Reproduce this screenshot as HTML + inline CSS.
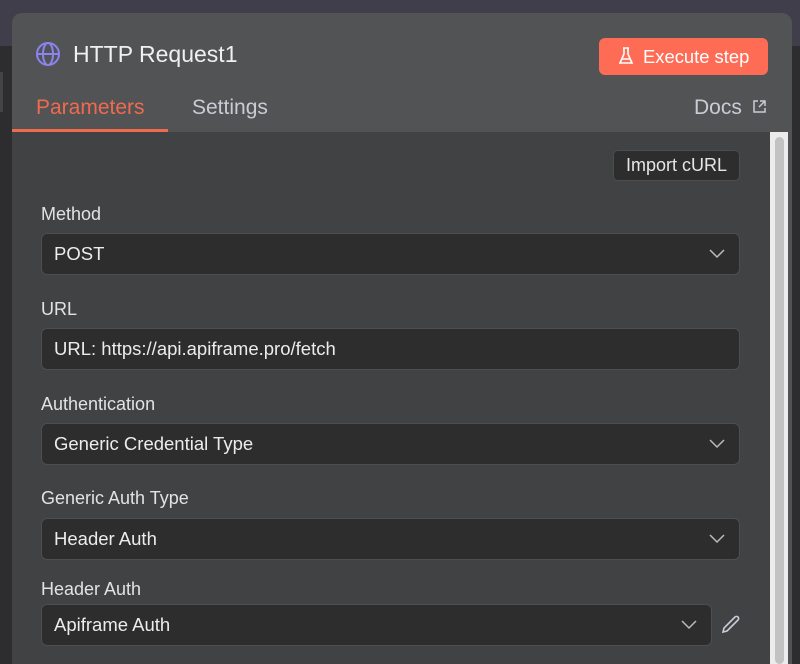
<!DOCTYPE html>
<html><head><style>
*{margin:0;padding:0;box-sizing:border-box}
html,body{width:800px;height:664px;overflow:hidden}
body{background:#2d2d2f;font-family:"Liberation Sans",sans-serif;position:relative}
.top{position:absolute;left:0;top:0;width:800px;height:46px;background:#403e4b}
.leftstrip{position:absolute;left:0;top:72px;width:3px;height:40px;background:#444}
.panel{position:absolute;left:12px;top:13px;width:780px;height:651px;background:#525354;border-radius:10px 10px 0 0;overflow:hidden}
.body{position:absolute;left:0;top:119px;width:758px;height:532px;background:#414243}
.track{position:absolute;left:758px;top:119px;width:18px;height:532px;background:#ececec}
.thumb{position:absolute;left:763px;top:124px;width:9px;height:527px;background:#c2c2c2;border-radius:5px}
.title{position:absolute;left:73px;top:41px;font-size:23px;color:#f0f0f0;line-height:26px}
.exec{position:absolute;left:599px;top:38px;width:169px;height:37px;background:#fe6c55;border-radius:6px;color:#fff;font-size:18.4px;line-height:37px;padding-left:44px}
.tab{position:absolute;top:96px;font-size:21px;line-height:24px}
.uline{position:absolute;left:12px;top:129px;width:156px;height:3px;background:#f06a4f}
.btn{position:absolute;left:613px;top:150px;width:127px;height:31px;background:#2d2d2d;border:1px solid #4c4c4c;border-radius:5px;color:#e6e6e6;font-size:18px;line-height:29px;text-align:center}
.lbl{position:absolute;left:41px;font-size:18px;color:#e2e2e2;line-height:20px}
.inp{position:absolute;left:41px;width:699px;height:42px;background:#2d2d2d;border:1px solid #4e4e4e;border-radius:6px;color:#ececec;font-size:18.5px;line-height:40px;padding-left:12px}
.chev{position:absolute;right:14px;top:15px}
</style></head><body>
<div class="top"></div>
<div class="leftstrip"></div>
<div class="panel">
<div class="body"></div>
<div class="track"></div>
<div class="thumb"></div>
</div>
<svg style="position:absolute;left:35px;top:41px" width="26" height="26" viewBox="0 0 26 26" fill="none" stroke="#8b83f0" stroke-width="2"><circle cx="13" cy="13" r="11"/><ellipse cx="13" cy="13" rx="5" ry="11"/><line x1="2" y1="13" x2="24" y2="13"/></svg>
<div class="title">HTTP Request1</div>
<div class="exec">Execute step</div>
<svg style="position:absolute;left:618px;top:47px" width="16" height="18" viewBox="0 0 16 18" fill="none" stroke="#fff" stroke-width="1.6"><path d="M5 1h6M6 1v6L2 16h12L10 7V1M4 12h8"/></svg>
<div class="tab" style="left:36px;color:#f06a4f">Parameters</div>
<div class="tab" style="left:192px;color:#c8ccd6">Settings</div>
<div class="tab" style="left:694px;color:#c8ccd6">Docs</div>
<svg style="position:absolute;left:752px;top:99px" width="15" height="15" viewBox="0 0 15 15" fill="none" stroke="#c8ccd6" stroke-width="1.5"><path d="M6 2H2v11h11V9M8 2h5v5M13 2L7 8"/></svg>
<div class="uline"></div>
<div class="btn">Import cURL</div>
<div class="lbl" style="top:204px">Method</div>
<div class="inp" style="top:233px">POST<svg class="chev" width="16" height="10" viewBox="0 0 16 10" fill="none" stroke="#bbb" stroke-width="1.5"><path d="M1 1l7 7 7-7"/></svg></div>
<div class="lbl" style="top:299px">URL</div>
<div class="inp" style="top:328px">URL: https://api.apiframe.pro/fetch</div>
<div class="lbl" style="top:394px">Authentication</div>
<div class="inp" style="top:423px">Generic Credential Type<svg class="chev" width="16" height="10" viewBox="0 0 16 10" fill="none" stroke="#bbb" stroke-width="1.5"><path d="M1 1l7 7 7-7"/></svg></div>
<div class="lbl" style="top:488px">Generic Auth Type</div>
<div class="inp" style="top:518px">Header Auth<svg class="chev" width="16" height="10" viewBox="0 0 16 10" fill="none" stroke="#bbb" stroke-width="1.5"><path d="M1 1l7 7 7-7"/></svg></div>
<div class="lbl" style="top:579px">Header Auth</div>
<div class="inp" style="top:604px;width:671px">Apiframe Auth<svg class="chev" width="16" height="10" viewBox="0 0 16 10" fill="none" stroke="#bbb" stroke-width="1.5"><path d="M1 1l7 7 7-7"/></svg></div>
<svg style="position:absolute;left:721px;top:614px" width="20" height="20" viewBox="0 0 20 20" fill="none" stroke="#c8ccd6" stroke-width="1.6"><path d="M2 18l1-4L14 3a2 2 0 0 1 3 3L6 17z"/></svg>
</body></html>
